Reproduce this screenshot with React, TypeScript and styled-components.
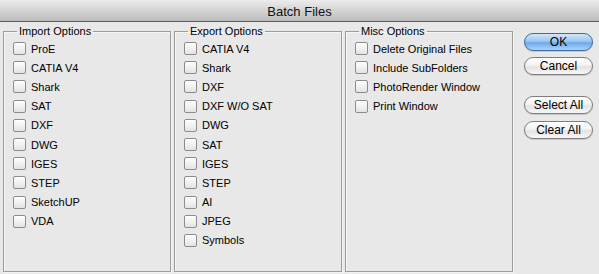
import * as React from "react";
import styled, { createGlobalStyle } from "styled-components";

const GlobalStyle = createGlobalStyle`
  html, body {
    margin: 0;
    padding: 0;
    background: #e8e8e8;
  }
  body {
    font-family: "Liberation Sans", Arial, sans-serif;
    color: #000;
  }
`;

const Window = styled.div`
  width: 599px;
  height: 274px;
  display: flex;
  flex-direction: column;
  background: #e8e8e8;
  overflow: hidden;
`;

const TitleBar = styled.div`
  height: 22px;
  flex: none;
  display: flex;
  align-items: center;
  justify-content: center;
  background: linear-gradient(#ececec, #d3d3d3 50%, #bcbcbc);
  border-bottom: 1px solid #5e5e5e;
  font-size: 13px;
  color: #111;
  padding-top: 1px;
  box-sizing: border-box;
`;

const Body = styled.div`
  flex: 1;
  display: flex;
  padding: 3px 0 2px 3px;
`;

const Groups = styled.div`
  display: flex;
  gap: 3px;
`;

const Group = styled.fieldset`
  width: 168px;
  box-sizing: border-box;
  margin: 0;
  padding: 0 0 0 9px;
  border: 1px solid #9c9c9c;
  box-shadow: inset 1px 1px 0 #f6f6f6, 1px 1px 0 #f4f4f4;
  display: flex;
  flex-direction: column;
`;

const Legend = styled.legend`
  font-size: 11px;
  line-height: 13px;
  padding: 0 2px;
  margin-left: 4px;
`;

const Row = styled.label`
  display: flex;
  align-items: center;
  height: 19.2px;
  font-size: 11px;
  gap: 5px;
  white-space: nowrap;
`;

const Box = styled.span`
  width: 13px;
  height: 13px;
  box-sizing: border-box;
  border: 1px solid #8c8c8c;
  border-radius: 2px;
  background: linear-gradient(#fdfdfd, #efefef 60%, #e2e2e2);
  box-shadow: inset 0 1px 0 #fff;
  flex: none;
`;

const List = styled.div`
  display: flex;
  flex-direction: column;
  margin-top: 1px;
`;

const Buttons = styled.div`
  display: flex;
  flex-direction: column;
  margin-left: 11px;
  padding-top: 8px;
  width: 69px;
`;

const Button = styled.button<{ $primary?: boolean; $gap?: number }>`
  height: 18px;
  width: 69px;
  margin: 0 0 ${(p) => p.$gap ?? 7}px 0;
  padding: 0;
  border-radius: 9px;
  font-family: "Liberation Sans", Arial, sans-serif;
  font-size: 12px;
  color: #000;
  border: 1px solid ${(p) => (p.$primary ? "#3d6aa4" : "#7d7d7d")};
  background: ${(p) =>
    p.$primary
      ? "linear-gradient(#d3e6fa, #9cc6f2 45%, #6ea9ea 55%, #a9d3f8)"
      : "linear-gradient(#ffffff, #f3f3f3 45%, #e3e3e3 55%, #f7f7f7)"};
  box-shadow: 0 1px 1px rgba(0, 0, 0, 0.15);
`;

const importItems = ["ProE", "CATIA V4", "Shark", "SAT", "DXF", "DWG", "IGES", "STEP", "SketchUP", "VDA"];
const exportItems = ["CATIA V4", "Shark", "DXF", "DXF W/O SAT", "DWG", "SAT", "IGES", "STEP", "AI", "JPEG", "Symbols"];
const miscItems = ["Delete Original Files", "Include SubFolders", "PhotoRender Window", "Print Window"];

const OptionGroup: React.FC<{ title: string; items: string[] }> = ({ title, items }) => (
  <Group>
    <Legend>{title}</Legend>
    <List>
      {items.map((item) => (
        <Row key={item}>
          <Box />
          {item}
        </Row>
      ))}
    </List>
  </Group>
);

const App: React.FC = () => {
  return (
    <>
      <GlobalStyle />
      <Window>
        <TitleBar>Batch Files</TitleBar>
        <Body>
          <Groups>
            <OptionGroup title="Import Options" items={importItems} />
            <OptionGroup title="Export Options" items={exportItems} />
            <OptionGroup title="Misc Options" items={miscItems} />
          </Groups>
          <Buttons>
            <Button $primary $gap={6}>OK</Button>
            <Button $gap={21}>Cancel</Button>
            <Button>Select All</Button>
            <Button>Clear All</Button>
          </Buttons>
        </Body>
      </Window>
    </>
  );
};

export default App;
